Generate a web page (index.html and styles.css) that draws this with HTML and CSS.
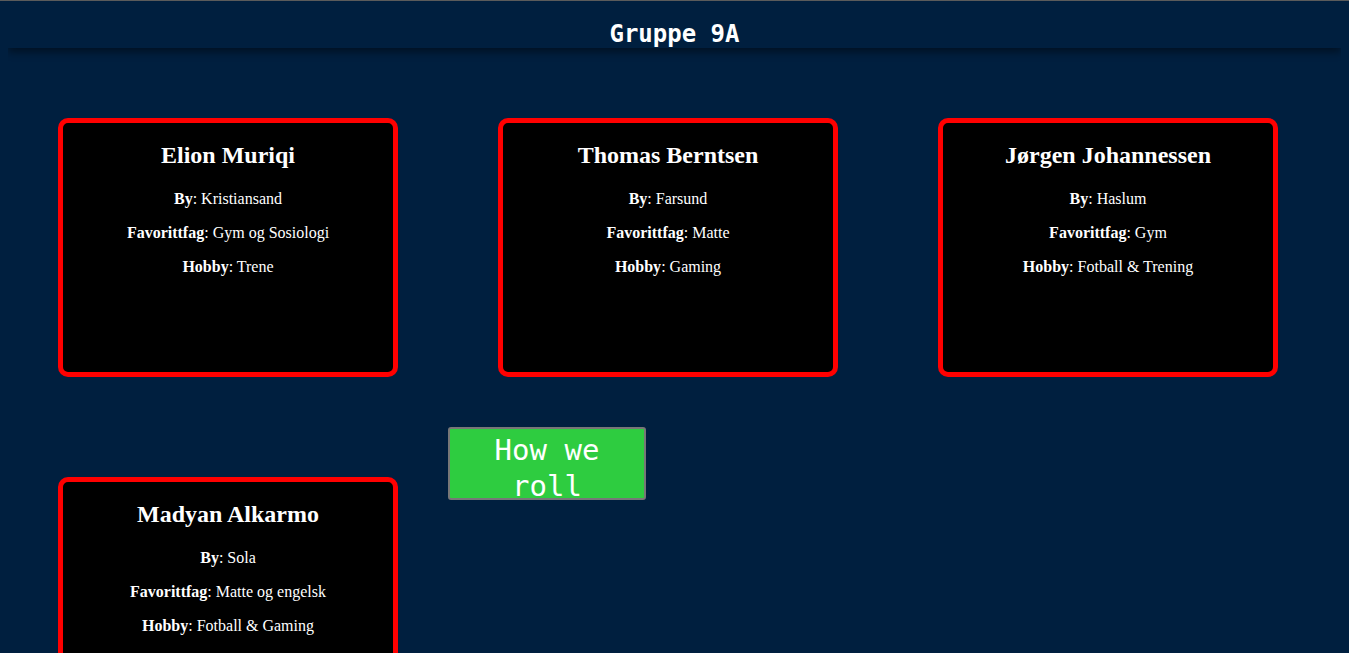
FILE: index.html
```html
<!DOCTYPE html>
<html lang="no">
<head>
<meta charset="utf-8">
<title>Gruppe 9A</title>
<link rel="stylesheet" href="styles.css">
</head>
<body>
<header class="topbar">
  <h1 class="title">Gruppe 9A</h1>
</header>
<main class="cards">
  <section class="card">
    <h2 class="name">Elion Muriqi</h2>
    <p><b>By</b>: Kristiansand</p>
    <p><b>Favorittfag</b>: Gym og Sosiologi</p>
    <p><b>Hobby</b>: Trene</p>
  </section>
  <section class="card">
    <h2 class="name">Thomas Berntsen</h2>
    <p><b>By</b>: Farsund</p>
    <p><b>Favorittfag</b>: Matte</p>
    <p><b>Hobby</b>: Gaming</p>
  </section>
  <section class="card">
    <h2 class="name">Jørgen Johannessen</h2>
    <p><b>By</b>: Haslum</p>
    <p><b>Favorittfag</b>: Gym</p>
    <p><b>Hobby</b>: Fotball &amp; Trening</p>
  </section>
  <section class="card">
    <h2 class="name">Madyan Alkarmo</h2>
    <p><b>By</b>: Sola</p>
    <p><b>Favorittfag</b>: Matte og engelsk</p>
    <p><b>Hobby</b>: Fotball &amp; Gaming</p>
  </section>
  <button class="roll">How we roll</button>
</main>
</body>
</html>
```
FILE: styles.css
```css
html {
  border-top: 1px solid #5b5b5b;
  background: #001f3f;
}
body {
  margin: 0 8px 8px;
  background: #001f3f;
  color: #fff;
  font-family: "Liberation Serif", "Times New Roman", serif;
}
.topbar {
  height: 47px;
  box-sizing: border-box;
  padding-top: 20px;
  text-align: center;
  background: #001f3f;
  box-shadow: 0 4px 8px rgba(0, 0, 0, 0.45);
}
.title {
  margin: 0;
  font-family: "DejaVu Sans Mono", monospace;
  font-size: 24px;
  line-height: 26px;
  font-weight: bold;
}
.cards {
  display: flex;
  flex-wrap: wrap;
  align-items: flex-start;
  padding-top: 20px;
}
.card {
  box-sizing: border-box;
  width: 340px;
  height: 259px;
  margin: 50px;
  background: #000;
  border: 5px solid #ff0000;
  border-radius: 10px;
  text-align: center;
  font-size: 16px;
  padding-top: 18px;
}
.name {
  font-size: 24px;
  margin: 0 0 21px;
  line-height: 28px;
}
.card p {
  margin: 0 0 16px;
  line-height: 18px;
}
.roll {
  width: 198px;
  height: 73px;
  margin: 0 50px 0 0;
  background: #2ecc40;
  border: 2px solid #777;
  border-radius: 3px;
  color: #fff;
  font-family: "DejaVu Sans Mono", monospace;
  font-size: 29px;
  line-height: 36px;
  padding: 3px 20px 0;
}
```
